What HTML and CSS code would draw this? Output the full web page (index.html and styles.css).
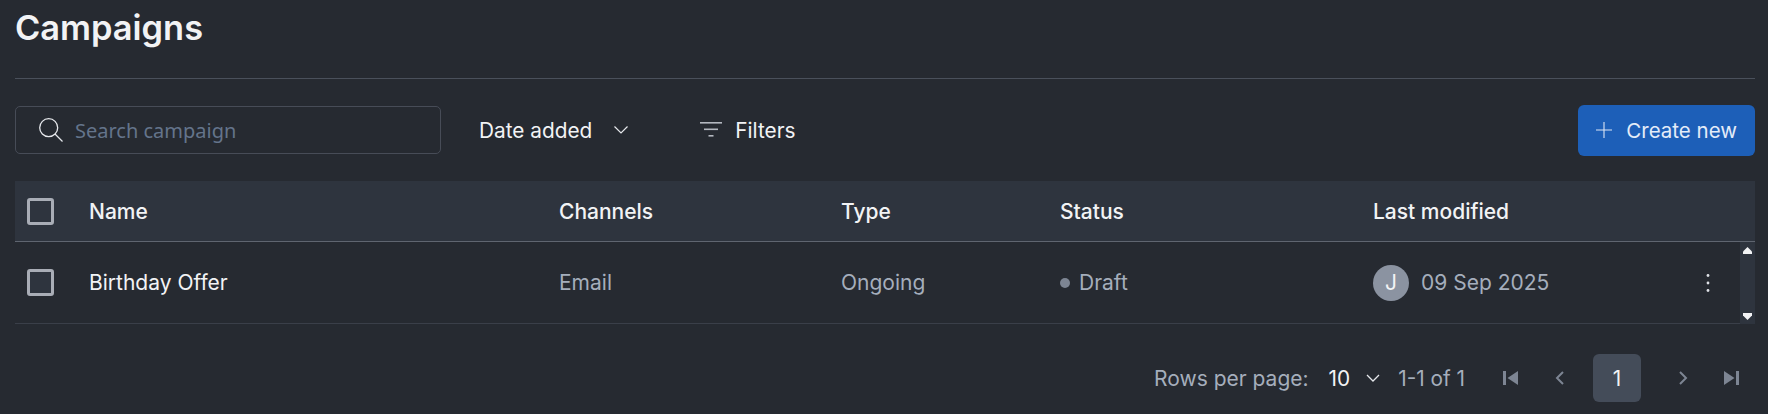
FILE: index.html
```html
<!DOCTYPE html>
<html lang="en">
<head>
    <meta charset="UTF-8">
    <meta name="viewport" content="width=device-width, initial-scale=1.0">
    <title>Campaigns</title>
    <link rel="stylesheet" href="styles.css">
</head>
<body>
    <h1 class="title">Campaigns</h1>

    <div class="toolbar">
        <div class="search">
            <svg class="search-icon" width="24" height="24" viewBox="0 0 24 24" fill="none" stroke="#e6e8ec" stroke-width="1.3">
                <circle cx="9.7" cy="9.7" r="9"/>
                <path d="M16 16 L23.5 23.5"/>
            </svg>
            <span class="search-text">Search campaign</span>
        </div>
        <div class="sort">
            <span>Date added</span>
            <svg width="16" height="10" viewBox="0 0 16 10" fill="none" stroke="#e6e8ec" stroke-width="1.2">
                <path d="M1.5 1.5 L8 8 L14.5 1.5"/>
            </svg>
        </div>
        <div class="filters">
            <svg width="22" height="16" viewBox="0 0 22 16" fill="#b4b8c0">
                <rect x="0" y="0" width="22" height="1.6"/>
                <rect x="4" y="6.5" width="14" height="1.6"/>
                <rect x="8.5" y="13" width="5" height="1.6"/>
            </svg>
            <span>Filters</span>
        </div>
        <button class="create">
            <svg width="18" height="18" viewBox="0 0 18 18" stroke="#dce6f5" stroke-width="1.1">
                <path d="M9 1 V17 M1 9 H17"/>
            </svg>
            <span>Create new</span>
        </button>
    </div>

    <div class="table">
        <div class="row head">
            <div class="cell-check"><span class="checkbox"></span></div>
            <div>Name</div>
            <div>Channels</div>
            <div>Type</div>
            <div>Status</div>
            <div>Last modified</div>
        </div>
        <div class="row body">
            <div class="cell-check"><span class="checkbox"></span></div>
            <div class="name">Birthday Offer</div>
            <div>Email</div>
            <div>Ongoing</div>
            <div class="status"><span class="dot"></span>Draft</div>
            <div class="modified">
                <span class="avatar">J</span>
                <span>09 Sep 2025</span>
                <svg class="more" width="4" height="18" viewBox="0 0 4 18" fill="#dfe2e7">
                    <circle cx="2" cy="1.5" r="1.4"/>
                    <circle cx="2" cy="9" r="1.4"/>
                    <circle cx="2" cy="16.5" r="1.4"/>
                </svg>
            </div>
            <div class="scrollbar">
                <svg width="9" height="7" viewBox="0 0 9 7" fill="#f2f3f5"><path d="M4.5 0 L9 4.5 V7 H0 V4.5 Z"/></svg>
                <svg width="9" height="7" viewBox="0 0 9 7" fill="#f2f3f5"><path d="M4.5 7 L9 2.5 V0 H0 V2.5 Z"/></svg>
            </div>
        </div>
    </div>

    <div class="pager">
        <span class="rows-label">Rows per page:</span>
        <span class="rows-value">10</span>
        <svg class="rows-caret" width="14" height="8" viewBox="0 0 14 8" fill="none" stroke="#e6e8ec" stroke-width="1.3">
            <path d="M1 1 L7 7 L13 1"/>
        </svg>
        <span class="range">1-1 of 1</span>
        <svg class="first" width="15" height="14" viewBox="0 0 15 14" fill="#7d8593">
            <rect x="0" y="0" width="3" height="14"/>
            <path d="M15 0 V14 L4.5 7 Z"/>
        </svg>
        <svg class="prev" width="9" height="14" viewBox="0 0 9 14" fill="none" stroke="#7d8593" stroke-width="2">
            <path d="M8 1 L2 7 L8 13"/>
        </svg>
        <span class="page">1</span>
        <svg class="next" width="9" height="14" viewBox="0 0 9 14" fill="none" stroke="#7d8593" stroke-width="2">
            <path d="M1 1 L7 7 L1 13"/>
        </svg>
        <svg class="last" width="15" height="14" viewBox="0 0 15 14" fill="#7d8593">
            <path d="M0 0 V14 L10.5 7 Z"/>
            <rect x="12" y="0" width="3" height="14"/>
        </svg>
    </div>
</body>
</html>
```

FILE: styles.css
```css
* {
    margin: 0;
    padding: 0;
    box-sizing: border-box;
}
body {
    height: 414px;
    padding: 0 13px 0 15px;
    overflow: hidden;
    background: #262a31;
    font-family: Inter, "Noto Sans", sans-serif;
    font-size: 21px;
    color: #f2f3f5;
}
.title {
    height: 79px;
    padding-top: 8px;
    border-bottom: 1px solid #4a505b;
    font-size: 34.4px;
    line-height: 40px;
    font-weight: 600;
}
.toolbar {
    display: flex;
    align-items: center;
    height: 102px;
    font-size: 20.8px;
}
.search {
    display: flex;
    align-items: center;
    width: 426px;
    height: 48px;
    padding-left: 23px;
    border: 1px solid #474c57;
    border-radius: 5px;
}
.search-icon {
    margin-right: 12px;
}
.search-text {
    color: #64748b;
    font-family: "Noto Sans", sans-serif;
    font-size: 20px;
}
.sort {
    display: flex;
    align-items: center;
    gap: 21px;
    margin-left: 38px;
}
.filters {
    display: flex;
    align-items: center;
    gap: 13px;
    margin-left: 71px;
}
.create {
    display: flex;
    align-items: center;
    gap: 13px;
    height: 51px;
    margin-left: auto;
    padding: 0 18px 0 17px;
    border: none;
    border-radius: 6px;
    background: #1d5fb8;
    color: #e4ecf8;
    font: inherit;
    font-size: 20.5px;
}
.table {
    border-bottom: 1px solid #3a3f49;
}
.row {
    display: grid;
    grid-template-columns: 74px 470px 282px 219px 313px 382px;
    align-items: center;
}
.head {
    height: 61px;
    border-bottom: 1px solid #5f6570;
    background: #2e343e;
    font-weight: 500;
}
.body {
    position: relative;
    height: 81px;
    color: #a5aebc;
}
.cell-check {
    padding-left: 12px;
}
.checkbox {
    display: block;
    width: 27px;
    height: 27px;
    border: 3px solid #a9adb6;
    border-radius: 3px;
    background: #2e343e;
}
.name {
    color: #f2f3f5;
}
.status {
    display: flex;
    align-items: center;
    gap: 9px;
}
.dot {
    width: 10px;
    height: 10px;
    border-radius: 50%;
    background: #7d8593;
}
.modified {
    display: flex;
    align-items: center;
    gap: 12px;
}
.avatar {
    display: flex;
    align-items: center;
    justify-content: center;
    width: 36px;
    height: 36px;
    border-radius: 50%;
    background: #8b93a1;
    color: #f2f3f5;
}
.more {
    margin-left: auto;
    margin-right: 45px;
}
.scrollbar {
    position: absolute;
    top: 0;
    right: 0;
    bottom: -1px;
    display: flex;
    flex-direction: column;
    align-items: center;
    justify-content: space-between;
    width: 15px;
    padding: 5px 0 4px;
    background: #2e343e;
}
.pager {
    display: flex;
    align-items: center;
    justify-content: flex-end;
    height: 48px;
    margin-top: 30px;
    padding-right: 16px;
    color: #a5aebc;
    font-size: 20.8px;
}
.rows-label {
    font-size: 21px;
}
.rows-value {
    margin-left: 20px;
    color: #f2f3f5;
}
.rows-caret {
    margin-left: 16px;
}
.range {
    margin-left: 18px;
}
.first {
    margin-left: 38px;
}
.prev {
    margin-left: 37px;
}
.page {
    display: flex;
    align-items: center;
    justify-content: center;
    width: 48px;
    height: 48px;
    margin-left: 29px;
    border-radius: 6px;
    background: #444c59;
    color: #f2f3f5;
}
.next {
    margin-left: 38px;
}
.last {
    margin-left: 36px;
}
```
